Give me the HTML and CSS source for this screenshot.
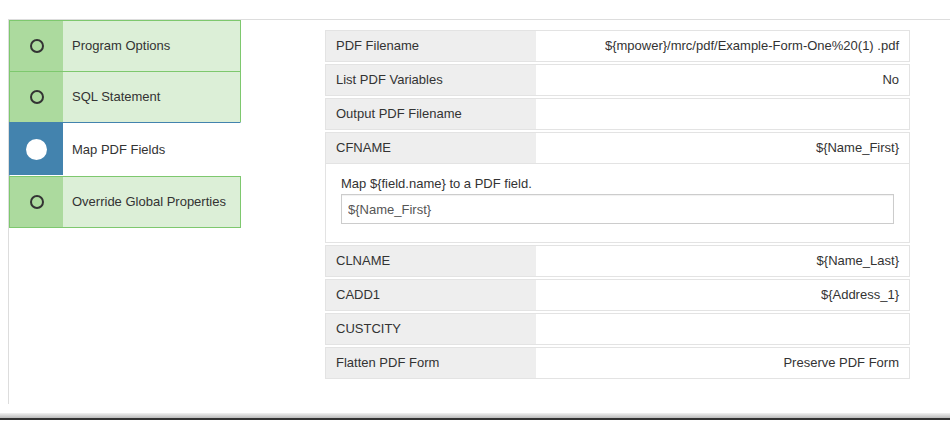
FILE: index.html
```html
<!DOCTYPE html>
<html>
	<head>
		<meta charset="UTF-8">
		<title>Map PDF Fields</title>
		<link rel="stylesheet" href="styles.css">
	</head>
	<body>
		<div class="wrap">
			<ul class="steps">
				<li class="step done">
					<span class="icon"><span class="dot"></span></span>
					<span class="name">Program Options</span>
				</li>
				<li class="step done">
					<span class="icon"><span class="dot"></span></span>
					<span class="name">SQL Statement</span>
				</li>
				<li class="step current">
					<span class="icon"><span class="dot"></span></span>
					<span class="name">Map PDF Fields</span>
				</li>
				<li class="step done last">
					<span class="icon"><span class="dot"></span></span>
					<span class="name">Override Global Properties</span>
				</li>
			</ul>
			<div class="props">
				<div class="row">
					<div class="key">PDF Filename</div>
					<div class="val">${mpower}/mrc/pdf/Example-Form-One%20(1) .pdf</div>
				</div>
				<div class="row">
					<div class="key">List PDF Variables</div>
					<div class="val">No</div>
				</div>
				<div class="row">
					<div class="key">Output PDF Filename</div>
					<div class="val"></div>
				</div>
				<div class="row open">
					<div class="line">
						<div class="key">CFNAME</div>
						<div class="val">${Name_First}</div>
					</div>
					<div class="edit">
						<label>Map ${field.name} to a PDF field.</label>
						<input type="text" value="${Name_First}">
					</div>
				</div>
				<div class="row">
					<div class="key">CLNAME</div>
					<div class="val">${Name_Last}</div>
				</div>
				<div class="row">
					<div class="key">CADD1</div>
					<div class="val">${Address_1}</div>
				</div>
				<div class="row">
					<div class="key">CUSTCITY</div>
					<div class="val"></div>
				</div>
				<div class="row">
					<div class="key">Flatten PDF Form</div>
					<div class="val">Preserve PDF Form</div>
				</div>
			</div>
		</div>
		<div class="foot"></div>
	</body>
</html>
```

FILE: styles.css
```css
*{
	padding: 0;
	margin: 0;
	box-sizing: border-box;
}
body{
	font-family: "Liberation Sans", Arial, sans-serif;
	font-size: 13px;
	color: #333;
	background: white;
}
ul{
	list-style: none;
}
.wrap{
	display: flex;
	align-items: flex-start;
	margin: 19px 0 0 8px;
	height: 385px;
	border-top: 1px solid #ddd;
	border-left: 1px solid #ddd;
}
.steps{
	width: 232px;
}
.step{
	display: flex;
	height: 52px;
	margin-top: -1px;
	border: 1px solid #7ec86e;
	background: #dcefd7;
}
.step:first-child{
	margin-top: 0;
}
.step .icon{
	width: 53px;
	display: flex;
	align-items: center;
	justify-content: center;
	padding-bottom: 1px;
	background: #acda9e;
}
.step .dot{
	width: 14px;
	height: 14px;
	border: 2px solid #333;
	border-radius: 50%;
}
.step .name{
	display: flex;
	align-items: center;
	padding: 0 0 2px 9px;
}
.step.current{
	height: 54px;
	border-color: #4383ae;
	border-right-color: white;
	border-bottom-color: white;
	background: white;
}
.step.current .icon{
	padding-bottom: 0;
	background: #4383ae;
}
.step.current .name{
	padding-bottom: 0;
}
.step.current .dot{
	width: 21px;
	height: 21px;
	border: none;
	background: white;
}
.step.last{
	margin-top: 0;
}
.props{
	width: 585px;
	margin: 10px 0 0 84px;
}
.row{
	display: flex;
	height: 32px;
	margin-bottom: 2px;
	border: 1px solid #e3e3e3;
}
.row .key{
	width: 210px;
	padding-left: 10px;
	background: #eee;
	line-height: 30px;
}
.row .val{
	flex: 1;
	padding-right: 10px;
	text-align: right;
	line-height: 30px;
}
.row.open{
	display: block;
	height: auto;
}
.row.open .line{
	display: flex;
	border-bottom: 1px solid #e3e3e3;
}
.edit{
	height: 78px;
	padding: 12px 15px 0 15px;
}
.edit label{
	display: block;
	line-height: 15px;
	margin-bottom: 3px;
}
.edit input{
	display: block;
	width: 553px;
	height: 30px;
	padding: 0 6px;
	border: 1px solid #ccc;
	font-family: "Liberation Sans", Arial, sans-serif;
	font-size: 13px;
	color: #555;
	box-shadow: inset 0 1px 1px rgba(0,0,0,0.06);
}
.foot{
	height: 7px;
	margin-top: 9px;
	background: linear-gradient(#f2f2f2, #bbb);
	border-bottom: 2px solid #333;
}
```
